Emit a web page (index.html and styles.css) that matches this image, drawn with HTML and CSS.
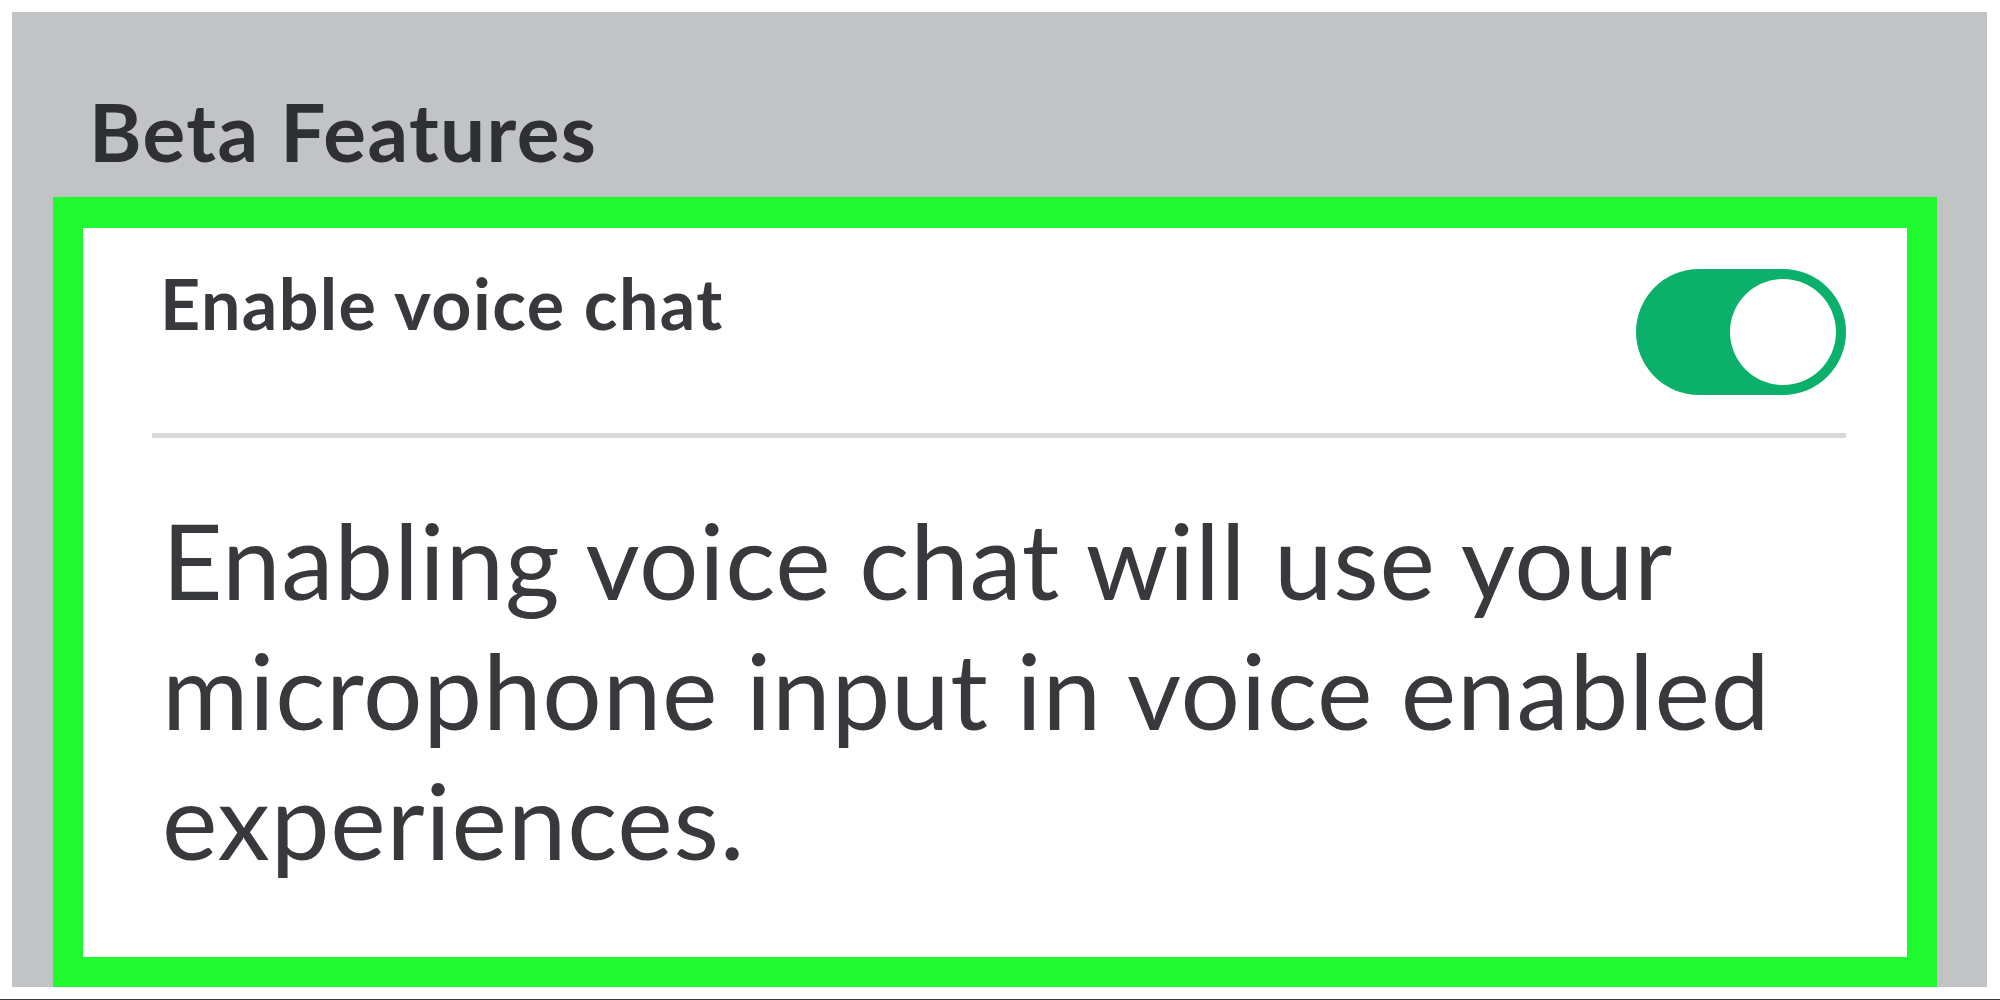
FILE: index.html
```html
<!DOCTYPE html>
<html lang="en">
<head>
  <meta charset="UTF-8">
  <title>Beta Features</title>
  <link rel="stylesheet" href="styles.css">
</head>
<body>
  <div class="page">
    <div class="panel">
      <h1 class="section-title">Beta Features</h1>

      <div class="card">
        <div class="card-body">
          <div class="setting-row">
            <div class="setting-name">Enable voice chat</div>
            <div class="toggle on"><div class="knob"></div></div>
          </div>
          <div class="divider"></div>
          <p class="setting-desc">Enabling voice chat will use your microphone input in voice enabled experiences.</p>
        </div>
      </div>
    </div>
  </div>
</body>
</html>
```

FILE: styles.css
```css
body {
  margin: 0;
  background: #fff;
  font-family: Lato, "Open Sans", sans-serif;
  color: #38393c;
}

.page {
  height: 1000px;
  box-sizing: border-box;
  padding: 12px 13px 0 12px;
  border-bottom: 1px solid #3a3a3c;
}

.panel {
  height: 975px;
  background: #c2c3c5;
  padding: 79px 50px 0 41px;
  box-sizing: border-box;
  display: flex;
  flex-direction: column;
}

.section-title {
  margin: 0 0 26px 36px;
  font-size: 80px;
  line-height: 80px;
  font-weight: 700;
  letter-spacing: 1.4px;
  color: #2f3033;
}

/* highlighted settings card */
.card {
  flex: 1;
  border: 30px solid #20f831;
  border-top-width: 31px;
  background: #fff;
}

.card-body {
  padding: 41px 61px 0 69px;
}

.setting-row {
  display: flex;
  justify-content: space-between;
  align-items: flex-start;
}

.setting-name {
  padding-left: 8px;
  margin-top: -1px;
  font-size: 70px;
  line-height: 70px;
  font-weight: 700;
  letter-spacing: 1.4px;
}

.toggle {
  width: 210px;
  height: 126px;
  box-sizing: border-box;
  padding: 0 10px;
  border-radius: 63px;
  background: #bfc0c2;
  display: flex;
  align-items: center;
}
.toggle.on {
  background: #0bb06b;
  justify-content: flex-end;
}
.knob {
  width: 106px;
  height: 106px;
  border-radius: 50%;
  background: #fff;
}

.divider {
  height: 5px;
  margin-top: 38px;
  background: #d9d9da;
}

.setting-desc {
  margin: 56px 0 0;
  padding-left: 10px;
  font-size: 105px;
  line-height: 130px;
  font-weight: 400;
  letter-spacing: 0.8px;
}
```
